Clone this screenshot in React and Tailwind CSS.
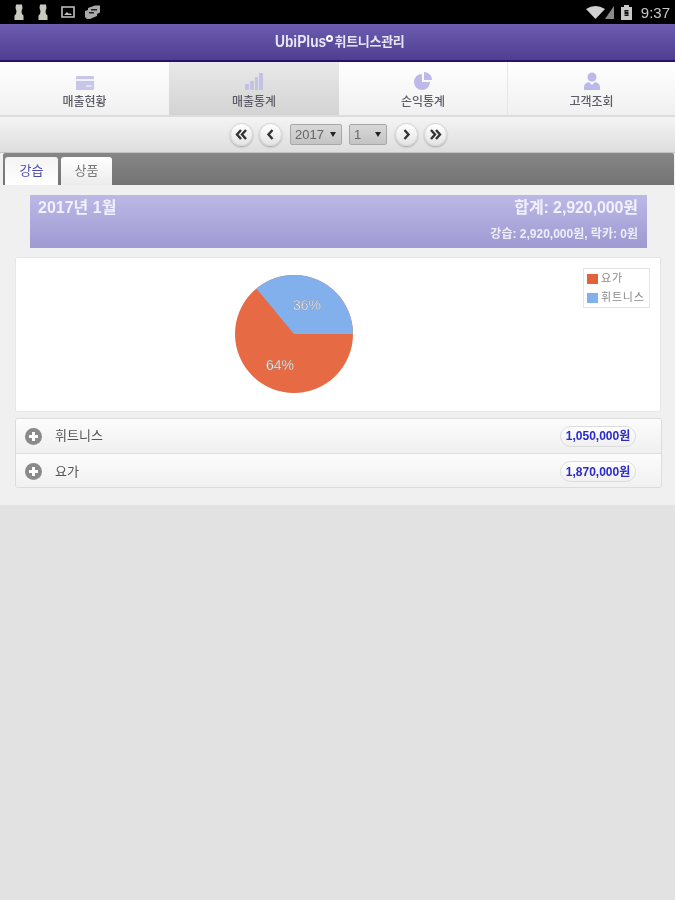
const font = { fontFamily: '"Liberation Sans","Noto Sans CJK KR",sans-serif' };

function Person({ className = "" }) {
  return (
    <svg width="12" height="16" viewBox="0 0 12 16" className={className}>
      <path d="M3 0.500h6l.5 3.500-1 3 .5 3 1.500 1.500v4.500H1.500v-4.500L3 10l.5-3-1-3z" fill="#c9c9c0" />
    </svg>
  );
}

function StatusBar() {
  return (
    <div className="h-6 bg-black flex items-center pl-[13px] pr-[5px] text-[#c4c4c4]">
      <Person />
      <Person className="ml-[12px]" />
      <svg width="14" height="12" viewBox="0 0 14 12" className="ml-[12px]">
        <path d="M1 1h12v10H1z" fill="none" stroke="#c4c4c4" strokeWidth="1.600" />
        <path d="M3 9l3-3 2 2 1-1 2 2z" fill="#c4c4c4" />
      </svg>
      <svg width="17" height="14" viewBox="0 0 17 14" className="ml-[9px]">
        <path d="M1 6l3-1V3l7-2.500h5v7l-3 1.500v2L6 14H3l-2-2z" fill="#aaa" />
        <path d="M7 4h6v1.500H7zM5 7h5v1.500H5z" fill="#222" />
      </svg>
      <div className="flex-1" />
      <svg width="19" height="14" viewBox="0 0 19 14">
        <path d="M0 4Q9.500-2 19 4L9.500 14z" fill="#d0d0d0" />
      </svg>
      <svg width="9" height="14" viewBox="0 0 9 14">
        <path d="M0 14L9 1v13z" fill="#8a8a8a" />
      </svg>
      <svg width="11" height="15" viewBox="0 0 11 15" className="ml-[7px]">
        <path d="M3 0h5v2h3v13H0V2h3z" fill="#c8c8c8" />
        <path d="M3.500 5h4v1.500h-3V7h3v4h-4V9.500h3V9h-3z" fill="#111" />
      </svg>
      <span className="ml-[9px] text-[15px] leading-none text-[#c8c8c8]" style={font}>9:37</span>
    </div>
  );
}

function Header() {
  return (
    <div className="h-[38px] bg-gradient-to-b from-[#6d5db0] to-[#4f3d92] border-b-2 border-[#26126e] flex items-center justify-center pl-[4px] text-[#e8e6f4]" style={font}>
      <span className="text-[16px] font-bold w-[51px] whitespace-nowrap scale-x-[0.86] origin-left">UbiPlus</span>
      <span className="w-[7px] h-[7px] rounded-full border-2 border-white -mt-[8px] mr-[2px]" />
      <span className="text-[13px] font-bold tracking-[-0.3px]">휘트니스관리</span>
    </div>
  );
}

const icons = {
  card: (
    <svg width="18" height="14" viewBox="0 0 18 14">
      <rect width="18" height="14" rx="1" fill="#c8c6e8" />
      <rect y="3" width="18" height="2" fill="#f0f0f8" />
      <rect x="10" y="9" width="6" height="2" fill="#e0e0f0" />
    </svg>
  ),
  bars: (
    <svg width="18" height="17" viewBox="0 0 18 17">
      <path d="M0 11h4v6H0zM5 8h4v9H5zM10 4h3v13h-3zM14 0h4v17h-4z" fill="#c4c2e4" />
    </svg>
  ),
  pie: (
    <svg width="18" height="18" viewBox="0 0 18 18">
      <path d="M8 2v8h8A8 8 0 1 1 8 2z" fill="#bdb8ea" />
      <path d="M10 0a8 8 0 0 1 8 8h-8z" fill="#bdb8ea" />
    </svg>
  ),
  user: (
    <svg width="18" height="18" viewBox="0 0 18 18">
      <circle cx="9" cy="5" r="4.500" fill="#bdb8ea" />
      <path d="M1 18v-3q0-4 5-5l3 3 3-3q5 1 5 5v3z" fill="#bdb8ea" />
    </svg>
  ),
};

function MenuItem({ icon, label, active, className = "" }) {
  return (
    <div className={`flex flex-col items-center pt-[10px] ${active ? "bg-gradient-to-b from-[#e9e9e9] to-[#d3d3d3]" : "bg-gradient-to-b from-white to-[#f0f0f0]"} ${className}`}>
      <div className="h-[18px] flex items-end">{icons[icon]}</div>
      <span className="text-[12px] leading-[14px] mt-[5px] text-[#5d5d68] font-medium">{label}</span>
    </div>
  );
}

function Menu() {
  return (
    <div className="flex h-[55px] border-b-2 border-[#dcdcdc]" style={font}>
      <MenuItem icon="card" label="매출현황" className="w-[169px]" />
      <MenuItem icon="bars" label="매출통계" active className="w-[170px]" />
      <MenuItem icon="pie" label="손익통계" className="w-[168px]" />
      <MenuItem icon="user" label="고객조회" className="flex-1 border-l border-[#e6e6e6]" />
    </div>
  );
}

function RoundBtn({ path }) {
  return (
    <div className="w-[23px] h-[23px] rounded-full bg-gradient-to-b from-white to-[#e4e4e4] border border-[#d4d4d4] shadow-[0_1px_2px_rgba(0,0,0,0.25)] flex items-center justify-center">
      <svg width="13" height="11" viewBox="0 0 13 11">
        <path d={path} fill="none" stroke="#333" strokeWidth="2.400" />
      </svg>
    </div>
  );
}

function Select({ value, className }) {
  return (
    <div className={`h-[21px] bg-gradient-to-b from-[#d8d8d8] to-[#c4c4c4] border border-[#a8a8a8] rounded-[2px] flex items-center justify-between pl-[4px] pr-[5px] text-[13px] text-[#666] ${className}`}>
      <span>{value}</span>
      <span className="w-0 h-0 border-x-[3px] border-x-transparent border-t-[5px] border-t-[#222]" />
    </div>
  );
}

function NavBar() {
  return (
    <div className="h-[35px] bg-gradient-to-b from-[#f4f4f4] to-[#dedede] flex items-center justify-center pl-[2px]" style={font}>
      <RoundBtn path="M6 1L2 5.500 6 10M11 1L7 5.500 11 10" />
      <div className="w-[6px]" />
      <RoundBtn path="M8.500 1L4.500 5.500 8.500 10" />
      <Select value="2017" className="w-[52px] ml-[8px]" />
      <Select value="1" className="w-[38px] ml-[7px]" />
      <div className="w-[8px]" />
      <RoundBtn path="M4.500 1L8.500 5.500 4.500 10" />
      <div className="w-[6px]" />
      <RoundBtn path="M2 1L6 5.500 2 10M7 1L11 5.500 7 10" />
    </div>
  );
}

function Tabs() {
  return (
    <div className="h-[32px] ml-[3px] mr-[1px] bg-gradient-to-b from-[#868686] to-[#747474] rounded-t-[2px] flex items-end pl-[2px] gap-[3px]" style={font}>
      <div className="w-[53px] h-[28px] bg-gradient-to-b from-[#f4f4f4] to-white rounded-t-[3px] flex items-center justify-center text-[13px] text-[#4a4ab0]">강습</div>
      <div className="w-[51px] h-[28px] bg-gradient-to-b from-[#ffffff] to-[#ececec] rounded-t-[3px] flex items-center justify-center text-[13px] text-[#777]">상품</div>
    </div>
  );
}

function Summary() {
  return (
    <div className="ml-[30px] mr-[28px] mt-[10px] h-[53px] bg-gradient-to-b from-[#bcb8e6] to-[#9e9ad2] pl-[8px] pr-[9px] text-white" style={font}>
      <div className="h-[26px] flex items-center justify-between border-b border-[#aeaadc] font-bold text-[#f2f1fb]">
        <span className="text-[16px]">2017년 1월</span>
        <span className="text-[16px] tracking-[-0.1px]">합계: 2,920,000원</span>
      </div>
      <div className="h-[26px] flex items-center justify-end text-[12px] font-bold text-[#eeedf9]">강습: 2,920,000원, 락카: 0원</div>
    </div>
  );
}

function Chart() {
  return (
    <div className="ml-[15px] mr-[14px] mt-[9px] h-[155px] bg-white border border-[#e6e6e6] rounded-[2px] flex justify-between relative" style={font}>
      <svg width="120" height="120" viewBox="0 0 120 120" className="ml-[218px] mt-[16px]">
        <circle cx="60" cy="60" r="59" fill="#e66b45" />
        <path d="M60 60L119 60A59 59 0 0 0 22.400 14.500z" fill="#82b0ec" />
        <text x="73" y="36" textAnchor="middle" fontSize="14" fontFamily="Liberation Sans" fill="#f4f4f4" stroke="#888" strokeWidth="0.300">36%</text>
        <text x="46" y="96" textAnchor="middle" fontSize="14" fontFamily="Liberation Sans" fill="#f4f4f4" stroke="#888" strokeWidth="0.300">64%</text>
      </svg>
      <div className="absolute right-[10px] top-[10px] w-[67px] h-[40px] border border-[#e4e4e4] bg-white pl-[3px] pt-[0px] text-[11px] leading-[19px] text-[#888] tracking-[0.8px]">
        <div className="flex items-center gap-[3px]"><span className="w-[11px] h-[10px] bg-[#e2623a]" />요가</div>
        <div className="flex items-center gap-[3px] whitespace-nowrap"><span className="w-[11px] h-[10px] bg-[#82b0ec]" />휘트니스</div>
      </div>
    </div>
  );
}

function Row({ label, amount, className = "" }) {
  return (
    <div className={`h-[35px] flex items-center pl-[9px] pr-[25px] bg-gradient-to-b from-[#fcfcfc] to-[#f0f0f0] ${className}`}>
      <span className="w-[17px] h-[17px] rounded-full bg-[#8a8a8a] relative flex items-center justify-center">
        <span className="absolute w-[9px] h-[3px] bg-white" />
        <span className="absolute w-[3px] h-[9px] bg-white" />
      </span>
      <span className="ml-[13px] text-[13px] text-[#555]">{label}</span>
      <span className="ml-auto h-[21px] w-[76px] rounded-full border border-[#dcdcdc] bg-gradient-to-b from-white to-[#f0f0f0] flex items-center justify-center text-[12px] font-bold text-[#2a2ad0]">{amount}</span>
    </div>
  );
}

export default function App() {
  return (
    <div className="w-[675px] h-[900px] bg-[#e2e2e2] overflow-hidden flex flex-col blur-[0.4px]" style={font}>
      <StatusBar />
      <Header />
      <Menu />
      <NavBar />
      <div className="h-[353px] bg-[#f0f0f0] border-t border-[#c4c4c4]">
        <Tabs />
        <Summary />
        <Chart />
        <div className="ml-[15px] mr-[13px] mt-[6px] h-[70px] border border-[#dcdcdc] rounded-[3px] overflow-hidden">
          <Row label="휘트니스" amount="1,050,000원" className="border-b border-[#dedede]" />
          <Row label="요가" amount="1,870,000원" />
        </div>
      </div>
    </div>
  );
}
